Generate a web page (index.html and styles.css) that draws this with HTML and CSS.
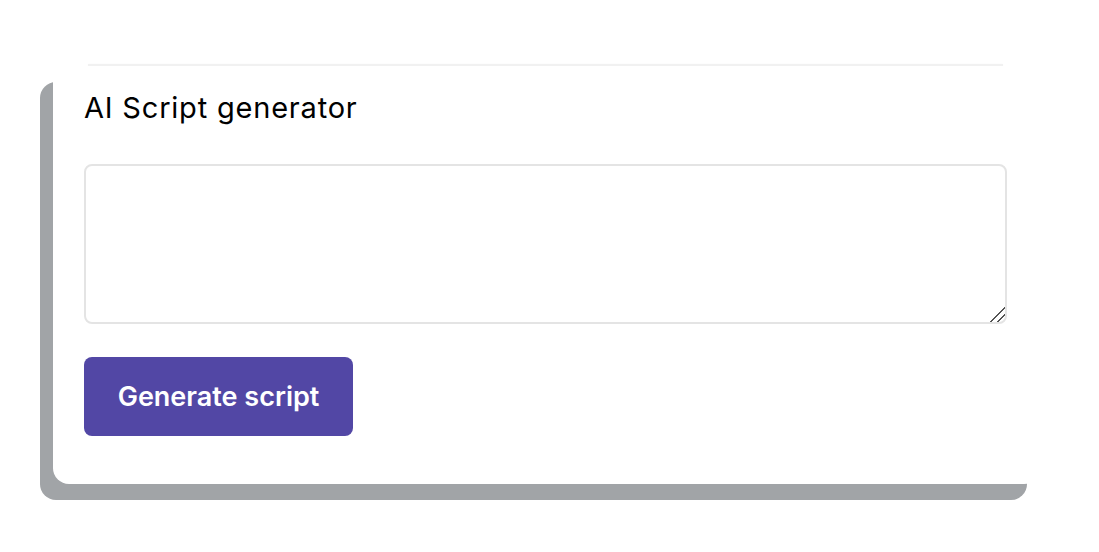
FILE: index.html
```html
<!DOCTYPE html>
<html lang="en">
<head>
  <meta charset="UTF-8" />
  <meta name="viewport" content="width=device-width, initial-scale=1.0" />
  <title>AI Script generator</title>
  <link rel="stylesheet" href="styles.css">
</head>
<body>
  <div class="top-rule"></div>

  <!-- Generator card -->
  <section class="card">
    <h2 class="card-title">AI Script generator</h2>
    <form class="gen-form">
      <textarea class="prompt" aria-label="Prompt"></textarea>
      <button type="submit" class="gen-btn">Generate script</button>
    </form>
  </section>
</body>
</html>
```

FILE: styles.css
```css
:root {
  --brand: #5247a5;
  --shadow: #a1a4a7;
  --text: #000;
}
* {
  box-sizing: border-box;
}
body {
  margin: 0;
  padding-bottom: 52px;
  background: #fff;
  color: var(--text);
  font-family: Inter, "Noto Sans", Arial, sans-serif;
}
.top-rule {
  height: 2px;
  margin: 64px 96px 0 88px;
  background: #f1f1f1;
  box-shadow: 0 0 2px rgba(0, 0, 0, 0.04);
}
/* ---------- CARD ---------- */
.card {
  width: 987px;
  height: 418px;
  margin-left: 53px;
  padding: 25px 32px 48px 31px;
  background: #fff;
  border-radius: 16px;
  box-shadow: -13px 16px 0 var(--shadow);
}
.card-title {
  margin: 0 0 39px 0;
  font-size: 29px;
  line-height: 34px;
  font-weight: 400;
  letter-spacing: 0.8px;
}
.gen-form {
  display: flex;
  flex-direction: column;
  align-items: flex-start;
  gap: 33px;
}
.prompt {
  width: 923px;
  height: 160px;
  border: 2px solid #e4e4e4;
  border-radius: 8px;
  padding: 10px 14px;
  font: inherit;
  font-size: 18px;
  outline: none;
}
.prompt::-webkit-resizer {
  background: linear-gradient(135deg,
    transparent 48%, #555 48%, #555 56%, transparent 56%,
    transparent 72%, #555 72%, #555 80%, transparent 80%);
}
.gen-btn {
  width: 269px;
  height: 79px;
  background: var(--brand);
  color: #fff;
  border: 0;
  border-radius: 8px;
  font-family: inherit;
  font-size: 27px;
  font-weight: 600;
  cursor: pointer;
}
.gen-btn:hover {
  opacity: 0.9;
}
```
